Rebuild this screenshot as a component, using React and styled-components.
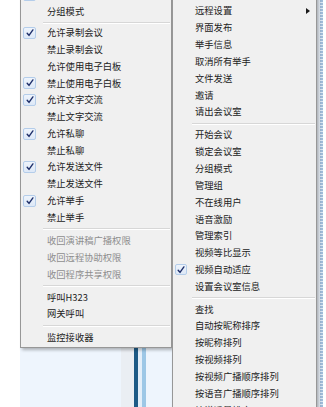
import React from "react";
import styled, { createGlobalStyle } from "styled-components";

const Global = createGlobalStyle`
  html, body { margin: 0; padding: 0; background: #ffffff; }
  body { font-family: "Noto Sans CJK SC", "Noto Sans", sans-serif; }
`;

const Page = styled.div`
  position: relative;
  width: 326px;
  height: 407px;
  overflow: hidden;
  background: #ffffff;
`;

const Backdrop = styled.div`
  display: flex;
  height: 100%;
`;

const Edge = styled.div`
  width: ${(p) => p.$w}px;
  flex: none;
  background: ${(p) => p.$bg};
`;

const WindowArea = styled.div`
  display: flex;
  width: 300px;
  flex: none;
  background: #eef5fd;
`;

const Strip = styled.div`
  width: ${(p) => p.$w}px;
  flex: none;
  background: ${(p) => p.$bg};
`;

const DottedEdge = styled.div`
  width: 3px;
  flex: none;
  background: repeating-linear-gradient(
    to bottom,
    #9fbbd9 0px,
    #9fbbd9 2px,
    #dce7f3 2px,
    #dce7f3 3px
  );
`;

const Menu = styled.div`
  position: absolute;
  top: -16px;
  left: ${(p) => p.$left}px;
  width: ${(p) => p.$width}px;
  ${(p) => (p.$bottom !== undefined ? `bottom: ${p.$bottom}px;` : "")}
  box-sizing: border-box;
  background: #f0f0f0;
  border: 1px solid #979797;
  padding: ${(p) => p.$pad}px 0 1px 0;
  box-shadow: 2px 2px 3px rgba(0, 0, 0, 0.28);
  overflow: hidden;
`;

const Row = styled.div`
  display: flex;
  align-items: center;
  height: ${(p) => p.$h}px;
  font-size: 9.3px;
  line-height: 1;
  color: ${(p) => (p.$disabled ? "#8e8e8e" : "#222222")};
  white-space: nowrap;
`;

const IconCell = styled.div`
  width: ${(p) => p.$gutter}px;
  flex: none;
  height: 100%;
  display: flex;
  align-items: center;
  padding-left: 2px;
  box-sizing: border-box;
`;

const CheckBox = styled.div`
  width: ${(p) => p.$size}px;
  height: ${(p) => p.$size - 1}px;
  box-sizing: border-box;
  border: 1px solid #b4cdea;
  border-radius: 2px;
  background: linear-gradient(#eef4fc, #dde8f7);
  display: flex;
  align-items: center;
  justify-content: center;
`;

const Label = styled.span`
  flex: 1;
  padding-left: ${(p) => p.$indent}px;
`;

const Arrow = styled.span`
  width: 0;
  height: 0;
  border-top: 3px solid transparent;
  border-bottom: 3px solid transparent;
  border-left: 4px solid #1a1a1a;
  margin-right: 6px;
`;

const Separator = styled.div`
  height: ${(p) => p.$h}px;
  margin-left: ${(p) => p.$gutter}px;
  margin-right: 1px;
  display: flex;
  align-items: center;
  &::after {
    content: "";
    flex: 1;
    height: 0;
    border-top: 1px solid #d7d7d7;
    border-bottom: 1px solid #ffffff;
  }
`;

const Check = () => (
  <svg width="8" height="8" viewBox="0 0 8 8">
    <path
      d="M1.2 4.2 L3 6.4 L6.9 0.9"
      fill="none"
      stroke="#1e2f6a"
      strokeWidth="1.4"
      strokeLinecap="round"
      strokeLinejoin="round"
    />
  </svg>
);

const leftItems = [
  { check: true, label: "" },
  { label: "分组模式" },
  { sep: 4.5 },
  { check: true, label: "允许录制会议" },
  { label: "禁止录制会议" },
  { label: "允许使用电子白板" },
  { check: true, label: "禁止使用电子白板" },
  { check: true, label: "允许文字交流" },
  { label: "禁止文字交流" },
  { check: true, label: "允许私聊" },
  { label: "禁止私聊" },
  { check: true, label: "允许发送文件" },
  { label: "禁止发送文件" },
  { check: true, label: "允许举手" },
  { label: "禁止举手" },
  { sep: 7 },
  { disabled: true, label: "收回演讲稿广播权限" },
  { disabled: true, label: "收回远程协助权限" },
  { disabled: true, label: "收回程序共享权限" },
  { sep: 6 },
  { label: "呼叫H323" },
  { label: "网关呼叫" },
  { sep: 6.5 },
  { label: "监控接收器" },
];

const rightItems = [
  { label: "" },
  { label: "远程设置", sub: true },
  { label: "界面发布" },
  { label: "举手信息" },
  { label: "取消所有举手" },
  { label: "文件发送" },
  { label: "邀请" },
  { label: "请出会议室" },
  { sep: 6 },
  { label: "开始会议" },
  { label: "锁定会议室" },
  { label: "分组模式" },
  { label: "管理组" },
  { label: "不在线用户" },
  { label: "语音激励" },
  { label: "管理索引" },
  { label: "视频等比显示" },
  { check: true, label: "视频自动适应" },
  { label: "设置会议室信息" },
  { sep: 5.8 },
  { label: "查找" },
  { label: "自动按昵称排序" },
  { label: "按昵称排列" },
  { label: "按视频排列" },
  { label: "按视频广播顺序排列" },
  { label: "按语音广播顺序排列" },
  { label: "按说话量排序" },
];

const MenuList = ({ items, gutter, indent, box, rowH }) =>
  items.map((it, i) =>
    it.sep ? (
      <Separator key={i} $h={it.sep} $gutter={gutter} />
    ) : (
      <Row key={i} $h={rowH} $disabled={it.disabled}>
        <IconCell $gutter={gutter}>
          {it.check && (
            <CheckBox $size={box}>
              <Check />
            </CheckBox>
          )}
        </IconCell>
        <Label $indent={indent}>{it.label}</Label>
        {it.sub && <Arrow />}
      </Row>
    )
  );

export default function App() {
  return (
    <>
      <Global />
      <Page>
        <Backdrop>
          <Edge $w={20} $bg="#ffffff" />
          <WindowArea>
            <Strip $w={101} $bg="#eef5fd" />
            <Strip $w={13} $bg="#eaeef3" />
            <Strip $w={4} $bg="#1d5a86" />
            <Strip $w={4} $bg="#e3eef9" />
            <Strip $w={4} $bg="#9dc7e6" />
            <Strip $w={174} $bg="#eef5fd" />
          </WindowArea>
          <DottedEdge />
          <Edge $w={3} $bg="#ffffff" />
        </Backdrop>

        <Menu $left={20} $width={152} $pad={1.75}>
          <MenuList items={leftItems} gutter={22} indent={4} box={13} rowH={16.75} />
        </Menu>

        <Menu $left={172} $width={145} $pad={0.8} $bottom={-40}>
          <MenuList items={rightItems} gutter={19} indent={3} box={12} rowH={16.85} />
        </Menu>
      </Page>
    </>
  );
}
